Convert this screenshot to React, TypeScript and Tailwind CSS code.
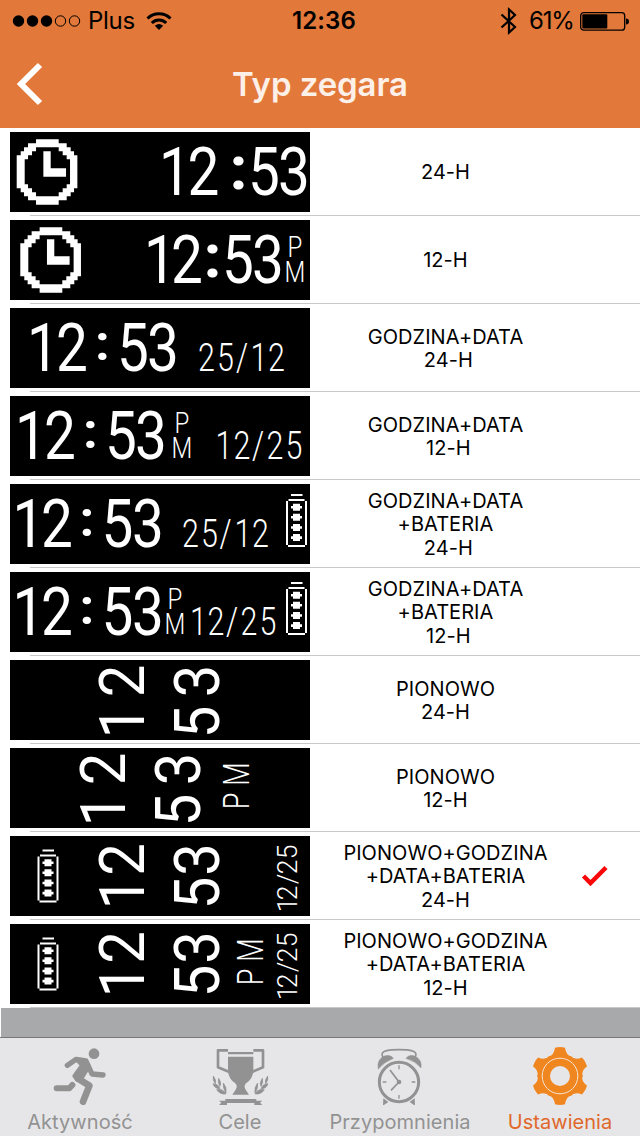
import { useState } from 'react';

type GlyphsProps = {
  text: string;
  // centre of every character along the reading direction
  at: number[];
  // baseline: y for horizontal text, x for vertical text
  base: number;
  size: number;
  squeeze?: number;
  weight?: number;
  vertical?: boolean;
};

function Glyphs({ text, at, base, size, squeeze = 0.84, weight = 400, vertical = false }: GlyphsProps) {
  const transform = vertical
    ? `translate(${base} 80) rotate(-90) scale(${squeeze} 1)`
    : `translate(0 ${base}) scale(${squeeze} 1)`;
  const xs = at.map((v) => ((vertical ? 80 - v : v) / squeeze).toFixed(2)).join(' ');
  return (
    <text x={xs} y={0} transform={transform} textAnchor="middle" fontSize={size} fontWeight={weight} fill="#fff">
      {text}
    </text>
  );
}

// at: 1, 2, colon, 5, 3
function Time({ at, tall = false }: { at: number[]; tall?: boolean }) {
  return (
    <>
      <Glyphs text="12" at={[at[0] + 3, at[1]]} base={63} size={67.5} />
      <Glyphs text=":" at={[at[2]]} base={tall ? 56.5 : 51.5} size={tall ? 61 : 50} squeeze={1.05} weight={700} />
      <Glyphs text="53" at={[at[3], at[4]]} base={63} size={67.5} />
    </>
  );
}

function DateText({ text, at }: { text: string; at: number[] }) {
  return <Glyphs text={text} at={at} base={63} size={39} squeeze={0.78} weight={300} />;
}

// P stacked on top of M
function Period({ x }: { x: number }) {
  const cx = x / 0.8;
  return (
    <text x={`${cx} ${cx}`} y="37 62.5" transform="scale(.8 1)" textAnchor="middle" fontSize={30} fontWeight={300} fill="#fff">
      PM
    </text>
  );
}

function VerticalTime({ x, shift = 0, gap = 0 }: { x: number; shift?: number; gap?: number }) {
  return (
    <>
      <Glyphs vertical text="12" at={[62 - gap, 21 + shift]} base={x} size={63} squeeze={0.92} />
      <Glyphs vertical text="53" at={[62 - gap, 21 + shift]} base={x + 75.5} size={63} squeeze={0.92} />
    </>
  );
}

function VerticalPeriod({ x }: { x: number }) {
  return <Glyphs vertical text="PM" at={[53, 26]} base={x} size={36.5} squeeze={0.74} weight={300} />;
}

function VerticalDate() {
  return <Glyphs vertical text="12/25" at={[69, 57, 43, 31, 16]} base={287} size={27} squeeze={0.98} weight={300} />;
}

function ClockFace({ x }: { x: number }) {
  return (
    <g transform={`translate(${x} 7.3) scale(.3333)`} fill="#fff">
      <path
        fillRule="evenodd"
        d="M58 0H126V12H150V24H162V36H172V48H182V147H172V159H162V171H150V183H126V196H58V183H34V171H22V159H12V147H0V48H12V36H22V24H34V12H58ZM58 24V36H46V48H34V60H24V135H34V147H46V159H58V171H126V159H138V147H150V135H160V60H150V48H138V36H126V24Z"
      />
      <path d="M80 36H102V87H148V112H80Z" />
    </g>
  );
}

function Cell({ x, y }: { x: number; y: number }) {
  return (
    <g transform={`translate(${x} ${y})`} fill="#fff">
      <path d="M5 0H16.500V2H5ZM2.500 5H18.500V7H2.500ZM0 7H2V51H0ZM19 7H21V51H19ZM2 51H19V53H2Z" />
      {[13.2, 23.3, 33.5, 43.6].map((mid) => (
        <path key={mid} d={`M7 ${mid - 3.5}h7v2.200h2v2.600h-2v2.200h-7v-2.200h-2v-2.600h2z`} />
      ))}
    </g>
  );
}

const options = [
  {
    lines: ['24-H'],
    art: (
      <>
        <ClockFace x={6.7} />
        <Time tall at={[162, 193.5, 228.5, 254, 284]} />
      </>
    ),
  },
  {
    lines: ['12-H'],
    art: (
      <>
        <ClockFace x={10.3} />
        <Time tall at={[147, 177, 202.5, 228, 258]} />
        <Period x={285} />
      </>
    ),
  },
  {
    lines: ['GODZINA+DATA', '\u00a024-H'],
    art: (
      <>
        <Time at={[30, 62, 92.5, 123, 153]} />
        <DateText text="25/12" at={[196.5, 215.5, 232, 249, 266.5]} />
      </>
    ),
  },
  {
    lines: ['GODZINA+DATA', '\u00a012-H'],
    art: (
      <>
        <Time at={[18, 50, 80.5, 111, 141]} />
        <Period x={172} />
        <DateText text="12/25" at={[214, 232, 248, 265, 284]} />
      </>
    ),
  },
  {
    lines: ['GODZINA+DATA', '+BATERIA', '\u00a024-H'],
    art: (
      <>
        <Time at={[15.5, 47, 77, 107.5, 138]} />
        <DateText text="25/12" at={[180.5, 199.5, 215.5, 233, 250.5]} />
        <Cell x={276} y={10} />
      </>
    ),
  },
  {
    lines: ['GODZINA+DATA', '+BATERIA', '\u00a012-H'],
    art: (
      <>
        <Time at={[15.5, 47, 77, 107.5, 138]} />
        <Period x={165} />
        <DateText text="12/25" at={[188.5, 206, 222, 239, 258]} />
        <Cell x={276} y={10} />
      </>
    ),
  },
  { lines: ['PIONOWO', '24-H'], art: <VerticalTime x={133.5} /> },
  {
    lines: ['PIONOWO', '12-H'],
    art: (
      <>
        <VerticalTime x={114.5} />
        <VerticalPeriod x={239} />
      </>
    ),
  },
  {
    lines: ['PIONOWO+GODZINA', '+DATA+BATERIA', '24-H'],
    art: (
      <>
        <Cell x={27.5} y={13.5} />
        <VerticalTime x={133.5} shift={2.5} gap={5} />
        <VerticalDate />
      </>
    ),
  },
  {
    lines: ['PIONOWO+GODZINA', '+DATA+BATERIA', '12-H'],
    art: (
      <>
        <Cell x={27.5} y={13.5} />
        <VerticalTime x={133.5} shift={2.5} gap={5} />
        <VerticalPeriod x={253} />
        <VerticalDate />
      </>
    ),
  },
];

function StatusBar() {
  return (
    <div className="flex h-10 items-center pt-px text-[24px] leading-none text-black">
      <div className="flex flex-1 items-center pl-3">
        <svg width="70" height="14" viewBox="0 0 70 14">
          {[6.5, 20.5, 34.5].map((cx) => (
            <circle key={cx} cx={cx} cy="7" r="5.700" />
          ))}
          {[48.5, 62.5].map((cx) => (
            <circle key={cx} cx={cx} cy="7" r="5.200" fill="none" stroke="#000" />
          ))}
        </svg>
        <span className="ml-1.5 w-[58px] tracking-[-0.3px]">Plus</span>
        <svg width="26" height="20" viewBox="0 0 26 20" fill="none" stroke="#000" strokeWidth="3">
          <path d="M1.500 7.500A16.500 16.500 0 0 1 24.500 7.500M5.800 12A10.200 10.200 0 0 1 20.200 12" />
          <path d="M8.800 14.800Q13 11 17.200 14.800L13 19Z" fill="#000" stroke="none" />
        </svg>
      </div>
      <span className="w-[66px] whitespace-nowrap pl-1 text-center font-semibold tracking-[0.1px]">12:36</span>
      <div className="flex flex-1 items-center justify-end pr-[10px]">
        <svg width="18" height="28" viewBox="0 0 18 28" fill="none" stroke="#000" strokeWidth="2.200">
          <path d="M1.500 7.500L15 20L9 25.500V2.500L15 8L1.500 20.500" />
        </svg>
        <span className="ml-[11px] w-[51px] tracking-[-1.200px]">61%</span>
        <svg width="50" height="20" viewBox="0 0 50 20">
          <rect x="0.700" y="1.700" width="44" height="17.500" rx="3" fill="none" stroke="#000" strokeWidth="1.300" />
          <rect x="2.300" y="3.300" width="25" height="14.300" rx="1" />
          <path d="M46 7.500q3 0 3 3t-3 3z" />
        </svg>
      </div>
    </div>
  );
}

function RunnerIcon() {
  return (
    <svg className="h-16 w-40" viewBox="0 108 480 192" fill="none" stroke="#929292" strokeLinecap="round" strokeLinejoin="round">
      <circle cx="282" cy="146" r="16" fill="#929292" stroke="none" />
      <path d="M202 181L228 163L258 168L276 207L309 210" strokeWidth="16" />
      <path d="M231 166L259 169L268 184L248 216L231 225L222 213L245 181Z" fill="#929292" strokeWidth="10" />
      <path d="M234 221L268 242L249 290" strokeWidth="20" />
      <path d="M170 250H208L217 240" strokeWidth="18" />
    </svg>
  );
}

const LAUREL =
  'M640 213Q650 226 646 236Q637 225 640 213ZM656 220Q666 235 660 244Q652 232 656 220ZM670 234Q681 247 678 264Q668 250 670 234ZM639 236Q657 237 660 252Q643 250 639 236ZM650 254Q670 250 678 267Q660 269 650 254Z';

function TrophyIcon() {
  return (
    <svg className="h-16 w-40" viewBox="480 108 480 192" fill="#929292">
      <path d="M684 141H760V148H684ZM684 155H760V194Q760 220 738 235Q730 243 737 254L747 269H697L707 254Q714 243 706 235Q684 220 684 194Z" />
      <path d="M684 136H654V187L688 201M760 136H789V187L756 201" fill="none" stroke="#929292" strokeWidth="8" strokeLinejoin="round" />
      <path d="M676 282H769V287H787L780 293L787 300H763V294H681V300H657L664 293L657 287H676Z" />
      <path d={LAUREL} stroke="#929292" strokeWidth="2" />
      <path d={LAUREL} stroke="#929292" strokeWidth="2" transform="translate(1443 0) scale(-1 1)" />
    </svg>
  );
}

function AlarmIcon() {
  return (
    <svg className="h-16 w-40" viewBox="0 108 480 192" fill="none" stroke="#929292">
      <circle cx="237" cy="231" r="59" strokeWidth="9" />
      <path d="M189 157C176 136 208 134 237 134S298 136 285 157" strokeWidth="5" />
      <path d="M175 192Q170 165 191 154Q211 147 220 160Q193 170 175 192ZM303 188Q306 165 286 154Q267 147 258 160Q286 168 303 188Z" fill="#929292" strokeWidth="2" />
      <path d="M190 280L205 291L189 302ZM284 280L269 291L285 302Z" fill="#929292" stroke="none" />
      <path d="M237 181V193M237 270V281M188 231H199M275 231H286" strokeWidth="4" />
      <path d="M210 195L237 231L213 256" strokeWidth="5" />
      <circle cx="237" cy="231" r="7" fill="#929292" stroke="none" />
    </svg>
  );
}

function GearIcon() {
  return (
    <svg className="h-16 w-40" viewBox="480 108 480 192" fill="#f0861f">
      <circle cx="720" cy="213" r="66" />
      {[0, 60, 120, 180, 240, 300].map((deg) => (
        <path key={deg} transform={`rotate(${deg} 720 213)`} d="M705 128Q720 124 735 128Q738 152 757 156L720 213L683 156Q702 152 705 128Z" />
      ))}
      <circle cx="720" cy="213" r="53.500" fill="none" stroke="#f5e5d4" strokeWidth="3" />
      <circle cx="720" cy="213" r="30" fill="#e6e6e8" />
    </svg>
  );
}

const tabs = [
  { label: 'Aktywność', icon: <RunnerIcon />, active: false },
  { label: 'Cele', icon: <TrophyIcon />, active: false },
  { label: 'Przypomnienia', icon: <AlarmIcon />, active: false },
  { label: 'Ustawienia', icon: <GearIcon />, active: true },
];

export default function App() {
  const [selected, setSelected] = useState(8);

  return (
    <div className="flex h-[1136px] w-[640px] flex-col overflow-hidden bg-white font-['Inter','Liberation_Sans',sans-serif]">
      <header className="h-32 bg-[#e27839]">
        <StatusBar />
        <div className="flex h-[88px] items-center">
          <button className="w-20 pl-4" aria-label="Wstecz">
            <svg width="28" height="44" viewBox="0 0 28 44" fill="none" stroke="#fff" strokeWidth="6">
              <path d="M24 3L5 22L24 41" />
            </svg>
          </button>
          <h1 className="flex-1 text-center text-[33px] font-semibold leading-none tracking-[-0.1px] text-[#fdf0e9]">Typ zegara</h1>
          <div className="w-20" />
        </div>
      </header>

      <main className="bg-white">
        {options.map((option, index) => (
          <div key={index} onClick={() => setSelected(index)}>
            <div className="flex h-[87px] items-center pl-2.5">
              <svg className="mt-px h-20 w-[300px] bg-black font-['Roboto',sans-serif]" viewBox="0 0 300 80">
                {option.art}
              </svg>
              <div className="w-[271px] pt-[3px] text-center text-[20px] leading-[23.5px] tracking-[0.05px] text-black">
                {option.lines.map((line) => (
                  <div key={line}>{line}</div>
                ))}
              </div>
              {selected === index && (
                <svg width="28" height="22" viewBox="0 0 28 22" fill="none" stroke="#f80808" strokeWidth="4.500">
                  <path d="M2.500 11L9.500 18L25 2.500" />
                </svg>
              )}
            </div>
            <div className="ml-[30px] h-px bg-[#c8c8ca]" />
          </div>
        ))}
      </main>

      <div className="ml-px h-[29px] bg-[#a8a9ab]" />

      <nav className="flex flex-1 border-t border-[#77777b] bg-[#e6e6e8]">
        {tabs.map((tab) => (
          <div key={tab.label} className="flex w-40 flex-col items-center pt-[3px]">
            {tab.icon}
            <span className={`mt-[5px] text-[20px] leading-6 tracking-[0.05px] ${tab.active ? 'text-[#e0682a]' : 'text-[#929292]'}`}>
              {tab.label}
            </span>
          </div>
        ))}
      </nav>
    </div>
  );
}
